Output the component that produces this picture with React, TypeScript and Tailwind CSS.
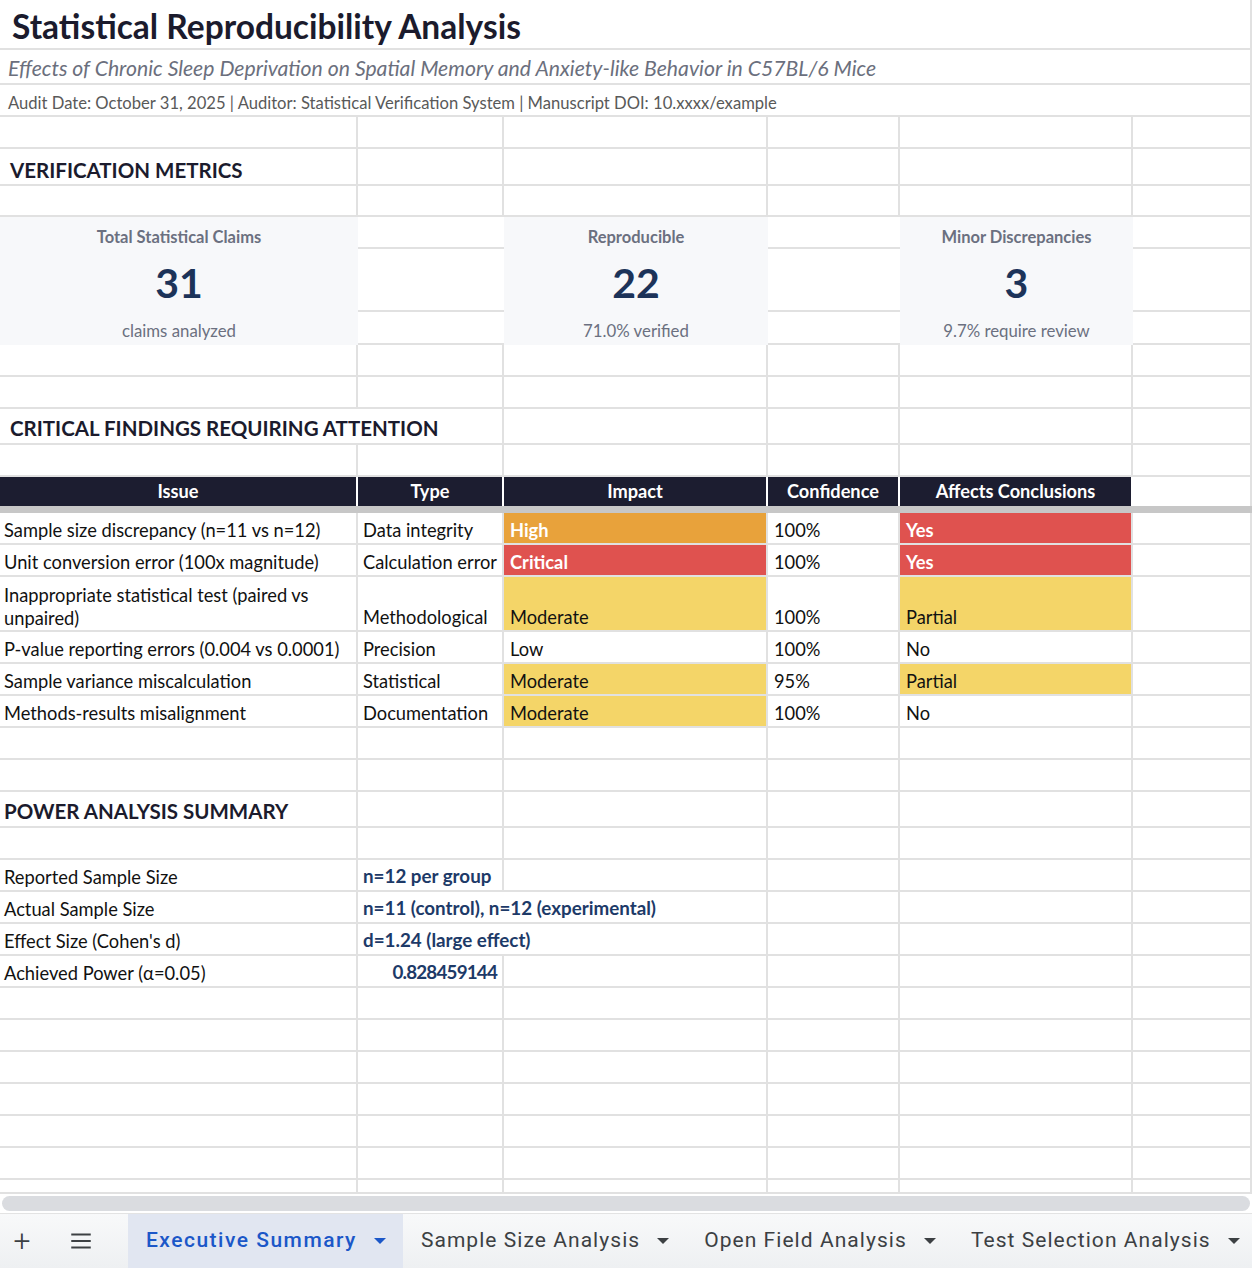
import clsx from "clsx";

type Tone = "high" | "critical" | "moderate" | "none";

const GRID = "grid grid-cols-[358px_146px_264px_132px_233px_119px]";
const LINE = "border-[#e1e1e1]";

const toneClass: Record<Tone, string> = {
  high: "bg-[#e8a23b] font-bold text-white",
  critical: "bg-[#df524f] font-bold text-white",
  moderate: "bg-[#f4d568]",
  none: "",
};

const findings: {
  issue: string;
  type: string;
  impact: [string, Tone];
  confidence: string;
  affects: [string, Tone];
  tall?: boolean;
}[] = [
  { issue: "Sample size discrepancy (n=11 vs n=12)", type: "Data integrity", impact: ["High", "high"], confidence: "100%", affects: ["Yes", "critical"] },
  { issue: "Unit conversion error (100x magnitude)", type: "Calculation error", impact: ["Critical", "critical"], confidence: "100%", affects: ["Yes", "critical"] },
  { issue: "Inappropriate statistical test (paired vs unpaired)", type: "Methodological", impact: ["Moderate", "moderate"], confidence: "100%", affects: ["Partial", "moderate"], tall: true },
  { issue: "P-value reporting errors (0.004 vs 0.0001)", type: "Precision", impact: ["Low", "none"], confidence: "100%", affects: ["No", "none"] },
  { issue: "Sample variance miscalculation", type: "Statistical", impact: ["Moderate", "moderate"], confidence: "95%", affects: ["Partial", "moderate"] },
  { issue: "Methods-results misalignment", type: "Documentation", impact: ["Moderate", "moderate"], confidence: "100%", affects: ["No", "none"] },
];

function Cell({ className, wrap, children }: { className?: string; wrap?: boolean; children?: React.ReactNode }) {
  return (
    <div
      className={clsx(
        "flex items-end border-b-2 border-r-2",
        wrap ? "whitespace-normal leading-[23px]" : "whitespace-nowrap leading-none",
        LINE,
        className ?? "px-[5px] pb-[4px]"
      )}
    >
      {children}
    </div>
  );
}

function EmptyRow({ h }: { h: string }) {
  return (
    <div className={clsx(GRID, h)}>
      {[0, 1, 2, 3, 4, 5].map((i) => (
        <Cell key={i} />
      ))}
    </div>
  );
}

function Metric({ label, value, note }: { label: string; value: string; note: string }) {
  return (
    <div className="row-span-3 grid grid-rows-[32px_63px_33px] bg-[#f7f8fa] text-center leading-none">
      <div className="flex items-end justify-center pb-[4px] text-[16.5px] font-bold text-[#6b7080]">{label}</div>
      <div className="flex items-center justify-center pt-[3px] text-[41px] font-bold text-[#1c3359]">{value}</div>
      <div className="flex items-end justify-center pb-[5px] text-[16.8px] text-[#6b7080]">{note}</div>
    </div>
  );
}

function Caret({ className }: { className?: string }) {
  return (
    <svg viewBox="0 0 10 5" className={clsx("h-[6px] w-[12px] shrink-0", className)}>
      <path d="M0 0h10L5 5z" fill="currentColor" />
    </svg>
  );
}

function SheetTab({ name, active }: { name: string; active?: boolean }) {
  return (
    <div
      className={clsx(
        "flex h-full shrink-0 items-center gap-[17px] whitespace-nowrap pl-[18px] pr-[17px] text-[21px]",
        active ? "bg-[#e1e6f1] font-medium tracking-[1.5px] text-[#1b57c8]" : "tracking-[1.05px] text-[#3c4043]"
      )}
    >
      <span>{name}</span>
      <Caret className={active ? "text-[#1b57c8]" : "text-[#3c4043]"} />
    </div>
  );
}

const HEAD = "text-[20.5px] font-bold text-[#1b1b2d]";
const VALUE = "font-bold text-[18.8px] text-[#1d3a68]";

export default function App() {
  return (
    <div className="h-[1268px] w-[1252px] overflow-hidden bg-white font-['Lato',sans-serif] text-[18.3px] text-[#111]">
      {/* title block, merged across the sheet */}
      <div className={clsx("flex h-[50px] items-end border-b-2 border-r-2 pb-[5px] pl-[12px] text-[33.5px] font-bold leading-none text-[#1b1b2d]", LINE)}>
        Statistical Reproducibility Analysis
      </div>
      <div className={clsx("flex h-[35px] items-end border-b-2 border-r-2 pb-[4px] pl-[8px] text-[21.2px] italic leading-none text-[#6b6f7d]", LINE)}>
        Effects of Chronic Sleep Deprivation on Spatial Memory and Anxiety-like Behavior in C57BL/6 Mice
      </div>
      <div className={clsx("flex h-[32px] items-end border-b-2 border-r-2 pb-[3px] pl-[8px] text-[16.6px] leading-none text-[#595959]", LINE)}>
        Audit Date: October 31, 2025 | Auditor: Statistical Verification System | Manuscript DOI: 10.xxxx/example
      </div>
      <EmptyRow h="h-[32px]" />
      <div className={clsx(GRID, "h-[37px]")}>
        <Cell className={clsx("pb-[4px] pl-[10px]", HEAD)}>VERIFICATION METRICS</Cell>
        <Cell />
        <Cell />
        <Cell />
        <Cell />
        <Cell />
      </div>
      <EmptyRow h="h-[31px]" />

      {/* metric cards */}
      <div className={clsx(GRID, "grid-rows-[32px_63px_33px]")}>
        <Metric label="Total Statistical Claims" value="31" note="claims analyzed" />
        <div className={clsx("border-b-2", LINE)} />
        <Metric label="Reproducible" value="22" note="71.0% verified" />
        <div className={clsx("border-b-2", LINE)} />
        <Metric label="Minor Discrepancies" value="3" note="9.7% require review" />
        <div className={clsx("border-b-2 border-r-2", LINE)} />
        <div className={clsx("col-start-2 border-b-2", LINE)} />
        <div className={clsx("col-start-4 border-b-2", LINE)} />
        <div className={clsx("col-start-6 border-b-2 border-r-2", LINE)} />
        <div className={clsx("col-start-2 border-b-2", LINE)} />
        <div className={clsx("col-start-4 border-b-2", LINE)} />
        <div className={clsx("col-start-6 border-b-2 border-r-2", LINE)} />
      </div>

      <EmptyRow h="h-[32px]" />
      <EmptyRow h="h-[32px]" />
      <div className={clsx(GRID, "h-[36px]")}>
        <Cell className={clsx("col-span-2 pb-[5px] pl-[10px]", HEAD)}>CRITICAL FINDINGS REQUIRING ATTENTION</Cell>
        <Cell />
        <Cell />
        <Cell />
        <Cell />
      </div>
      <EmptyRow h="h-[32px]" />

      {/* findings table */}
      <div className={clsx(GRID, "h-[29px]")}>
        {["Issue", "Type", "Impact", "Confidence", "Affects Conclusions"].map((h) => (
          <div key={h} className="flex items-center justify-center border-r-2 border-white bg-[#1c1d30] pt-[1px] text-[18.2px] font-bold text-white">
            {h}
          </div>
        ))}
        <div className={clsx("border-r-2", LINE)} />
      </div>
      <div className="h-[7px] bg-[#c7c7c7]" />
      {findings.map((f) => (
        <div key={f.issue} className={clsx(GRID, f.tall ? "h-[55px]" : "h-[32px]")}>
          <Cell wrap={f.tall} className={f.tall ? "pb-0 pl-[4px] pr-[5px]" : "pb-[4px] pl-[4px]"}>
            {f.issue}
          </Cell>
          <Cell>{f.type}</Cell>
          <Cell className={clsx("px-[6px] pb-[4px]", toneClass[f.impact[1]])}>{f.impact[0]}</Cell>
          <Cell className="px-[6px] pb-[4px]">{f.confidence}</Cell>
          <Cell className={clsx("px-[6px] pb-[4px]", toneClass[f.affects[1]])}>{f.affects[0]}</Cell>
          <Cell />
        </div>
      ))}
      <EmptyRow h="h-[32px]" />
      <EmptyRow h="h-[32px]" />

      {/* power analysis */}
      <div className={clsx(GRID, "h-[36px]")}>
        <Cell className={clsx("pb-[5px] pl-[4px]", HEAD)}>POWER ANALYSIS SUMMARY</Cell>
        <Cell />
        <Cell />
        <Cell />
        <Cell />
        <Cell />
      </div>
      <EmptyRow h="h-[32px]" />
      <div className={clsx(GRID, "h-[32px]")}>
        <Cell className="pb-[4px] pl-[4px]">Reported Sample Size</Cell>
        <Cell className={clsx("px-[5px] pb-[4px]", VALUE)}>n=12 per group</Cell>
        <Cell />
        <Cell />
        <Cell />
        <Cell />
      </div>
      <div className={clsx(GRID, "h-[32px]")}>
        <Cell className="pb-[4px] pl-[4px]">Actual Sample Size</Cell>
        <Cell className={clsx("col-span-2 px-[5px] pb-[4px]", VALUE)}>n=11 (control), n=12 (experimental)</Cell>
        <Cell />
        <Cell />
        <Cell />
      </div>
      <div className={clsx(GRID, "h-[32px]")}>
        <Cell className="pb-[4px] pl-[4px]">Effect Size (Cohen's d)</Cell>
        <Cell className={clsx("col-span-2 px-[5px] pb-[4px]", VALUE)}>d=1.24 (large effect)</Cell>
        <Cell />
        <Cell />
        <Cell />
      </div>
      <div className={clsx(GRID, "h-[32px]")}>
        <Cell className="pb-[4px] pl-[4px]">Achieved Power (α=0.05)</Cell>
        <Cell className={clsx("justify-end px-[5px] pb-[4px] tracking-[-0.8px]", VALUE)}>0.828459144</Cell>
        <Cell />
        <Cell />
        <Cell />
        <Cell />
      </div>
      {[0, 1, 2, 3, 4, 5].map((i) => (
        <EmptyRow key={i} h="h-[32px]" />
      ))}
      <EmptyRow h="h-[14px]" />

      {/* horizontal scrollbar */}
      <div className="px-[2px] pt-[2px]">
        <div className="h-[15px] rounded-full bg-[#dadce0]" />
      </div>

      {/* sheet tabs */}
      <div className="mt-[2px] flex h-[55px] items-center border-t border-[#e3e3e3] bg-gradient-to-b from-[#f8f9fa] to-[#eef0f2] font-['Roboto',sans-serif]">
        <div className="flex w-[44px] shrink-0 justify-center text-[30px] font-light leading-none text-[#3c4043]">+</div>
        <div className="flex w-[74px] shrink-0 justify-center">
          <svg viewBox="0 0 24 24" className="h-[26px] w-[26px] text-[#3c4043]">
            <path d="M3 6h18M3 12h18M3 18h18" stroke="currentColor" strokeWidth="2" />
          </svg>
        </div>
        <div className="ml-[10px] flex h-full">
          <SheetTab name="Executive Summary" active />
          <SheetTab name="Sample Size Analysis" />
          <SheetTab name="Open Field Analysis" />
          <SheetTab name="Test Selection Analysis" />
        </div>
      </div>
    </div>
  );
}
